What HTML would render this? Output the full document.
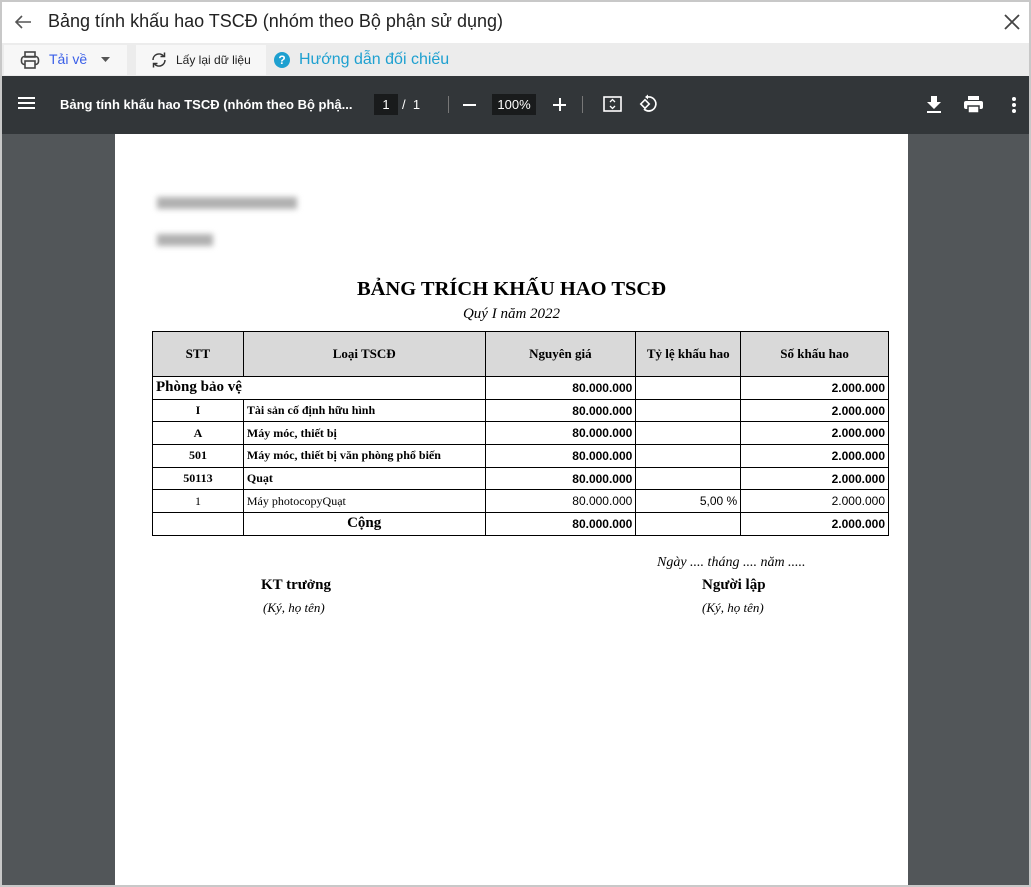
<!DOCTYPE html>
<html><head><meta charset="utf-8"><style>
*{margin:0;padding:0;box-sizing:border-box}
body{width:1031px;height:887px;overflow:hidden;background:#c8c8c8;font-family:"Liberation Sans",sans-serif;position:relative}
.win{position:absolute;left:2px;top:2px;width:1027px;height:883px;background:#fff;overflow:hidden}
.title{position:absolute;left:0;top:0;width:100%;height:41px;background:#fff}
.tb{position:absolute;left:0;top:41px;width:100%;height:33px;background:#ececec}
.pdfbar{position:absolute;left:0;top:74px;width:100%;height:58px;background:#323639;color:#fff}
.view{position:absolute;left:0;top:132px;width:100%;height:760px;background:#525659}
.page{position:absolute;left:113px;top:0;width:793px;height:760px;background:#fff;font-family:"Liberation Serif",serif}
table{position:absolute;left:37px;top:197px;border-collapse:collapse;width:737px}
td{border:1px solid #000;font-size:12px;height:22.7px;padding:0 3px}
.h td{background:#d9d9d9;font-weight:bold;text-align:center;height:45px;font-size:13px}
.n{font-family:"Liberation Sans",sans-serif;text-align:right;font-size:12px}
.b{font-weight:bold}
.c{text-align:center}
.blur{position:absolute;background:#b0b0b0;filter:blur(3px);height:12px}
</style></head><body><div class="win">
<div class="title">
<svg style="position:absolute;left:12px;top:12px" width="18" height="16" viewBox="0 0 18 16"><path d="M17 8H2M8 2L2 8l6 6" stroke="#555" stroke-width="1.6" fill="none"/></svg>
<div style="position:absolute;left:46px;top:9px;font-size:18px;color:#222">Bảng tính khấu hao TSCĐ (nhóm theo Bộ phận sử dụng)</div>
<svg style="position:absolute;left:1002px;top:12px" width="16" height="16"><path d="M1 1L15 15M15 1L1 15" stroke="#444" stroke-width="1.8"/></svg>
</div>
<div class="tb">
<div style="position:absolute;left:2px;top:2px;width:123px;height:30px;background:#f7f7f7"></div>
<svg style="position:absolute;left:18px;top:8px" width="20" height="18" viewBox="0 0 20 18"><rect x="5" y="1" width="10" height="5" fill="none" stroke="#444" stroke-width="1.6"/><rect x="1.5" y="5.5" width="17" height="8" rx="3" fill="none" stroke="#444" stroke-width="1.6"/><rect x="5" y="10" width="10" height="7" fill="#f7f7f7" stroke="#444" stroke-width="1.6"/></svg>
<div style="position:absolute;left:47px;top:8px;font-size:14px;color:#3a5fe8">Tải về</div>
<svg style="position:absolute;left:99px;top:14px" width="9" height="5"><path d="M0 0h9L4.5 5z" fill="#555"/></svg>
<div style="position:absolute;left:134px;top:2px;width:130px;height:30px;background:#f7f7f7"></div>
<svg style="position:absolute;left:148px;top:8px" width="18" height="18" viewBox="0 0 18 18"><path d="M3 9a6 6 0 0 1 10.5-4M15 9a6 6 0 0 1-10.5 4" stroke="#333" stroke-width="1.5" fill="none"/><path d="M14.5 1.5v4h-4M3.5 16.5v-4h4" stroke="#333" stroke-width="1.5" fill="none"/></svg>
<div style="position:absolute;left:174px;top:10px;font-size:12px;color:#222">Lấy lại dữ liệu</div>
<div style="position:absolute;left:272px;top:9px;width:16px;height:16px;border-radius:50%;background:#1ea0d0;color:#fff;font-size:12px;font-weight:bold;text-align:center;line-height:16px">?</div>
<div style="position:absolute;left:297px;top:8px;font-size:16px;color:#1ea0d0">Hướng dẫn đối chiếu</div>
</div>
<div class="pdfbar">
<div style="position:absolute;left:16px;top:21px;width:17px;height:2px;background:#fff;box-shadow:0 5px 0 #fff,0 10px 0 #fff"></div>
<div style="position:absolute;left:58px;top:21px;font-size:13px;font-weight:bold">Bảng tính khấu hao TSCĐ (nhóm theo Bộ phậ...</div>
<div style="position:absolute;left:372px;top:18px;width:24px;height:21px;background:#191b1c;font-size:13px;text-align:center;line-height:21px">1</div>
<div style="position:absolute;left:400px;top:21px;font-size:13px">/&nbsp;&nbsp;1</div>
<div style="position:absolute;left:446px;top:20px;width:1px;height:17px;background:#777"></div>
<div style="position:absolute;left:461px;top:28px;width:13px;height:2px;background:#fff"></div>
<div style="position:absolute;left:490px;top:18px;width:44px;height:21px;background:#191b1c;font-size:13px;text-align:center;line-height:21px">100%</div>
<div style="position:absolute;left:551px;top:28px;width:13px;height:2px;background:#fff"></div>
<div style="position:absolute;left:556.5px;top:22px;width:2px;height:13px;background:#fff"></div>
<div style="position:absolute;left:580px;top:20px;width:1px;height:17px;background:#777"></div>
<svg style="position:absolute;left:601px;top:20px" width="19" height="16"><rect x="1" y="1" width="17" height="14" fill="none" stroke="#fff" stroke-width="1.6"/><path d="M7 6l2.5-2.5L12 6M7 10l2.5 2.5L12 10" stroke="#fff" fill="none" stroke-width="1.3"/></svg>
<svg style="position:absolute;left:637px;top:18px" width="20" height="20" viewBox="0 0 20 20"><path d="M9 3a7 7 0 1 1-4 12" stroke="#fff" stroke-width="1.7" fill="none"/><path d="M9 0.5v5L6 3z" fill="#fff"/><rect x="3" y="7" width="6" height="6" transform="rotate(45 6 10)" fill="none" stroke="#fff" stroke-width="1.6"/></svg>
<svg style="position:absolute;left:925px;top:20px" width="14" height="17"><path d="M4 0h6v6h4L7 13 0 6h4z" fill="#fff"/><rect x="0" y="15" width="14" height="2" fill="#fff"/></svg>
<svg style="position:absolute;left:962px;top:20px" width="19" height="17"><rect x="4" y="0" width="11" height="4" fill="#fff"/><rect x="0" y="5" width="19" height="8" rx="2" fill="#fff"/><rect x="4" y="10" width="11" height="7" fill="#fff" stroke="#323639" stroke-width="1.5"/></svg>
<div style="position:absolute;left:1010px;top:21px;width:4px;height:4px;border-radius:50%;background:#fff;box-shadow:0 6px 0 #fff,0 12px 0 #fff"></div>
</div>
<div class="view"><div class="page">
<div class="blur" style="left:42px;top:63px;width:140px"></div>
<div class="blur" style="left:42px;top:100px;width:56px"></div>
<div style="position:absolute;left:0;width:793px;top:144px;text-align:center;font-size:20.5px;font-weight:bold">BẢNG TRÍCH KHẤU HAO TSCĐ</div>
<div style="position:absolute;left:0;width:793px;top:172px;text-align:center;font-size:15px;font-style:italic">Quý I năm 2022</div>
<table>
<colgroup><col style="width:91px"><col style="width:242px"><col style="width:151px"><col style="width:105px"><col style="width:148px"></colgroup>
<tr class="h"><td>STT</td><td>Loại TSCĐ</td><td>Nguyên giá</td><td>Tỷ lệ khấu hao</td><td>Số khấu hao</td></tr>
<tr><td colspan="2" class="b" style="font-size:15px">Phòng bảo vệ</td><td class="n b">80.000.000</td><td></td><td class="n b">2.000.000</td></tr>
<tr><td class="b c">I</td><td class="b">Tài sản cố định hữu hình</td><td class="n b">80.000.000</td><td></td><td class="n b">2.000.000</td></tr>
<tr><td class="b c">A</td><td class="b">Máy móc, thiết bị</td><td class="n b">80.000.000</td><td></td><td class="n b">2.000.000</td></tr>
<tr><td class="b c">501</td><td class="b">Máy móc, thiết bị văn phòng phổ biến</td><td class="n b">80.000.000</td><td></td><td class="n b">2.000.000</td></tr>
<tr><td class="b c">50113</td><td class="b">Quạt</td><td class="n b">80.000.000</td><td></td><td class="n b">2.000.000</td></tr>
<tr><td class="c">1</td><td>Máy photocopyQuạt</td><td class="n">80.000.000</td><td class="n">5,00 %</td><td class="n">2.000.000</td></tr>
<tr><td></td><td class="b c" style="font-size:15px">Cộng</td><td class="n b">80.000.000</td><td></td><td class="n b">2.000.000</td></tr>
</table>
<div style="position:absolute;left:542px;top:421px;font-size:14px;font-style:italic">Ngày .... tháng .... năm .....</div>
<div style="position:absolute;left:146px;top:443px;font-size:15px;font-weight:bold">KT trưởng</div>
<div style="position:absolute;left:148px;top:466px;font-size:13px;font-style:italic">(Ký, họ tên)</div>
<div style="position:absolute;left:587px;top:443px;font-size:15px;font-weight:bold">Người lập</div>
<div style="position:absolute;left:587px;top:466px;font-size:13px;font-style:italic">(Ký, họ tên)</div>
</div></div>
</div></body></html>
